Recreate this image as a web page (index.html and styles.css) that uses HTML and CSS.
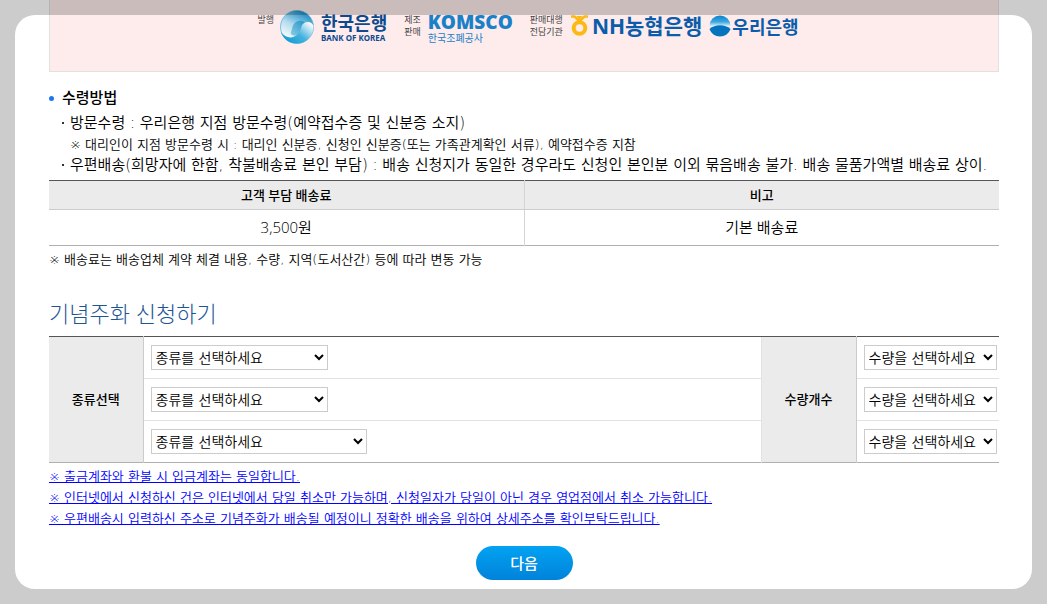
FILE: index.html
```html
<!DOCTYPE html>
<html lang="ko">
<head>
<meta charset="utf-8">
<meta name="viewport" content="width=device-width, initial-scale=1">
<title>기념주화 신청하기</title>
<link rel="stylesheet" href="styles.css">
</head>
<body>
<main class="page">
  <section class="banner">
    <div class="org">
      <span class="role">발행</span>
      <svg class="bok-mark" width="34" height="34" viewBox="0 0 34 34" aria-hidden="true">
        <defs>
          <linearGradient id="leaf" x1="0.2" y1="0.8" x2="0.6" y2="0"><stop offset="0" stop-color="#f4fafd"/><stop offset=".45" stop-color="#b5dcee"/><stop offset="1" stop-color="#1a8dc4"/></linearGradient>
          <linearGradient id="curl" x1="0.1" y1="0.9" x2="1" y2="0.2"><stop offset="0" stop-color="#0b9ad2"/><stop offset=".5" stop-color="#45b3de"/><stop offset="1" stop-color="#f8fcfe"/></linearGradient>
          <linearGradient id="core" x1="0" y1="1" x2="1" y2="0"><stop offset="0" stop-color="#8dcbe6"/><stop offset="1" stop-color="#1d93ca"/></linearGradient>
        </defs>
        <circle cx="17" cy="17" r="16.500" fill="url(#leaf)" stroke="#5fb8dd" stroke-width=".8"/>
        <path d="M12 19c1-6 5-9 10-8 4 1 5 5 3 8-2 5-8 8-13 6-2-1-1-3 0-6z" fill="url(#core)"/>
        <path d="M33.500 16c0 10-7 17.500-17 17.500C8 33.500 3 28 1 22c4 6 11 7 16 3 5-4 3-9 7-12 4-2 8-1 9.500 3z" fill="url(#curl)"/>
      </svg>
      <span class="wordmark bok"><b>한국은행</b><small>BANK OF KOREA</small></span>
    </div>
    <div class="org">
      <span class="role">제조<br>판매</span>
      <span class="wordmark komsco"><b>KOMSCO</b><small>한국조폐공사</small></span>
    </div>
    <div class="org">
      <span class="role">판매대행<br>전담기관</span>
      <svg class="nh-mark" width="17" height="21" viewBox="0 0 17 21" aria-hidden="true">
        <path d="M0 1.500h3.500L8.500 6l5-4.500H17" stroke="#fdb913" stroke-width="2.600" fill="none"/>
        <path d="M5.500 1h6l-3 4z" fill="#fdb913"/>
        <circle cx="8.500" cy="13" r="5.800" fill="none" stroke="#fdb913" stroke-width="4"/>
      </svg>
      <span class="bank nh">NH농협은행</span>
      <svg class="woori-mark" width="22" height="22" viewBox="0 0 22 22" aria-hidden="true">
        <defs><linearGradient id="sky" x1="0" y1="0" x2="0" y2="1"><stop offset="0" stop-color="#0a84cf"/><stop offset=".3" stop-color="#3ba7dd"/><stop offset=".55" stop-color="#fff"/></linearGradient></defs>
        <circle cx="11" cy="11" r="10.500" fill="url(#sky)"/>
        <path d="M.5 14C6 9 16 9 21.500 14 20 18.500 16 21.500 11 21.500S2 18.500.5 14z" fill="#0573bd"/>
      </svg>
      <span class="bank woori">우리은행</span>
    </div>
  </section>

  <section class="pickup">
    <h3 class="subhead">수령방법</h3>
    <ul class="methods">
      <li>방문수령 : 우리은행 지점 방문수령(예약접수증 및 신분증 소지)
        <p class="note">※ 대리인이 지점 방문수령 시 : 대리인 신분증, 신청인 신분증(또는 가족관계확인 서류), 예약접수증 지참</p></li>
      <li>우편배송(희망자에 한함, 착불배송료 본인 부담) : 배송 신청지가 동일한 경우라도 신청인 본인분 이외 묶음배송 불가. 배송 물품가액별 배송료 상이.</li>
    </ul>
    <table class="fees">
      <thead><tr><th scope="col">고객 부담 배송료</th><th scope="col">비고</th></tr></thead>
      <tbody><tr><td>3,500원</td><td>기본 배송료</td></tr></tbody>
    </table>
    <p class="note">※ 배송료는 배송업체 계약 체결 내용, 수량, 지역(도서산간) 등에 따라 변동 가능</p>
  </section>

  <form class="apply">
    <h2 class="title">기념주화 신청하기</h2>
    <table class="order">
      <tbody>
        <tr>
          <th class="kind-head" rowspan="3" scope="rowgroup">종류선택</th>
          <td><select class="kind" aria-label="종류선택 1"><option>종류를 선택하세요</option></select></td>
          <th class="count-head" rowspan="3" scope="rowgroup">수량개수</th>
          <td class="count-cell"><select class="count" aria-label="수량개수 1"><option>수량을 선택하세요</option></select></td>
        </tr>
        <tr>
          <td><select class="kind" aria-label="종류선택 2"><option>종류를 선택하세요</option></select></td>
          <td><select class="count" aria-label="수량개수 2"><option>수량을 선택하세요</option></select></td>
        </tr>
        <tr>
          <td><select class="kind wide" aria-label="종류선택 3"><option>종류를 선택하세요</option></select></td>
          <td><select class="count" aria-label="수량개수 3"><option>수량을 선택하세요</option></select></td>
        </tr>
      </tbody>
    </table>
    <ul class="notices">
      <li><a href="#">※ 출금계좌와 환불 시 입금계좌는 동일합니다.</a></li>
      <li><a href="#">※ 인터넷에서 신청하신 건은 인터넷에서 당일 취소만 가능하며, 신청일자가 당일이 아닌 경우 영업점에서 취소 가능합니다.</a></li>
      <li><a href="#">※ 우편배송시 입력하신 주소로 기념주화가 배송될 예정이니 정확한 배송을 위하여 상세주소를 확인부탁드립니다.</a></li>
    </ul>
    <div class="actions"><button class="next" type="button">다음</button></div>
  </form>
</main>
<div class="spotlight" aria-hidden="true"></div>
</body>
</html>
```
FILE: styles.css
```css
* { box-sizing: border-box; }
body {
  margin: 0;
  min-height: 100vh;
  background: #fff;
  color: #000;
  font: 350 15px/21px "DejaVu Sans", "Noto Sans CJK KR", sans-serif;
}
h2, h3, p, ul { margin: 0; padding: 0; }
ul { list-style: none; }
table { width: 100%; border-collapse: collapse; }
.page { padding: 0 48px 24px 49px; overflow: hidden; }

.spotlight {
  position: fixed;
  inset: 15px;
  border-radius: 20px;
  box-shadow: 0 0 0 40px rgba(0, 0, 0, .2);
  pointer-events: none;
}

/* Issuer banner */
.banner {
  display: flex;
  justify-content: center;
  gap: 17px;
  height: 72px;
  padding: 10px 0 0 8px;
  background: #feecec;
  border: 1px solid #e3e0e0;
  border-top: 0;
}
.org { display: flex; align-items: flex-start; }
.role { padding-top: 4px; color: #444; font: 400 9px/12px "Noto Sans CJK KR", sans-serif; }
.bok-mark { margin: 0 7px 0 6px; }
.wordmark { display: flex; flex-direction: column; }
.bok { color: #0b4a8f; }
.bok b { font: 700 18px/24px "Noto Sans CJK KR", sans-serif; }
.bok small { font: 700 8px/8px "Noto Sans", sans-serif; }
.komsco { margin-left: 7px; color: #1a80c8; }
.komsco b { font: 800 19px/25px "Open Sans", sans-serif; }
.komsco small { font: 400 10px/6px "Noto Sans CJK KR", sans-serif; }
.nh-mark { margin: 5px 4px 0 8px; }
.woori-mark { margin: 5px 1px 0 7px; }
.bank { color: #0b5cab; }
.nh { font: 700 21px/32px "Open Sans", "Noto Sans CJK KR", sans-serif; }
.woori { font: 700 18px/32px "Noto Sans CJK KR", sans-serif; }

/* Pickup methods */
.subhead {
  display: flex;
  align-items: center;
  gap: 8px;
  margin-top: 15px;
  font-size: 15px;
  line-height: 22px;
  font-weight: 500;
}
.subhead::before { content: ""; width: 5px; height: 5px; border-radius: 50%; background: #1c78f0; }
.methods { margin: 4px 0; padding-left: 21px; white-space: nowrap; }
.methods li { position: relative; }
.methods li::before {
  content: "";
  position: absolute;
  top: 9px;
  left: -8px;
  width: 2px;
  height: 2px;
  background: #333;
}
.note { font-size: 13px; line-height: 21px; }

.fees { table-layout: fixed; margin-bottom: 3px; border-top: 1px solid #555; border-bottom: 1px solid #b0b0b0; }
.fees th, .fees td { padding: 0; text-align: center; }
.fees th { height: 29px; background: #ebebeb; border-bottom: 1px solid #ccc; font: 500 13px/21px "Open Sans", "Noto Sans CJK KR", sans-serif; }
.fees td { height: 36px; font-family: "Open Sans", "Noto Sans CJK KR", sans-serif; font-size: 15px; }
.fees th + th, .fees td + td { border-left: 1px solid #d5d5d5; }

/* Application form */
.title {
  margin: 27px 0 7px;
  color: #1c5594;
  font: 300 22px/32px "Open Sans", "Noto Sans CJK KR", sans-serif;
}
.order { border-top: 1px solid #555; border-bottom: 1px solid #b0b0b0; }
.order td { height: 42px; padding: 0 0 0 7px; border-top: 1px solid #e2e2e2; }
.order tr:first-child td { border-top-color: #555; }
.order th {
  padding: 0;
  background: #ebebeb;
  border-right: 1px solid #ccc;
  font-size: 13px;
  font-weight: 500;
}
.kind-head { width: 94px; }
.count-head { width: 95px; border-left: 1px solid #e2e2e2; }
.count-cell { width: 143px; }
select {
  display: block;
  height: 25px;
  padding: 0;
  border: 1px solid #ccc;
  border-radius: 0;
  background: #fff;
  color: #000;
  font: 350 14px/21px "DejaVu Sans", "Noto Sans CJK KR", sans-serif;
}
.kind { width: 177px; }
.kind.wide { width: 216px; }
.count { width: 133px; }

.notices { margin-top: 3px; font-size: 13px; line-height: 21px; }
.notices a { color: #00f; text-decoration: underline; }
.actions { display: flex; justify-content: center; margin-top: 17px; }
.next {
  width: 97px;
  height: 34px;
  padding: 0;
  border: 0;
  border-radius: 17px;
  background: linear-gradient(#02a2f2, #0083da);
  color: #fff;
  font: 500 15px/34px "Noto Sans CJK KR", sans-serif;
}
```
